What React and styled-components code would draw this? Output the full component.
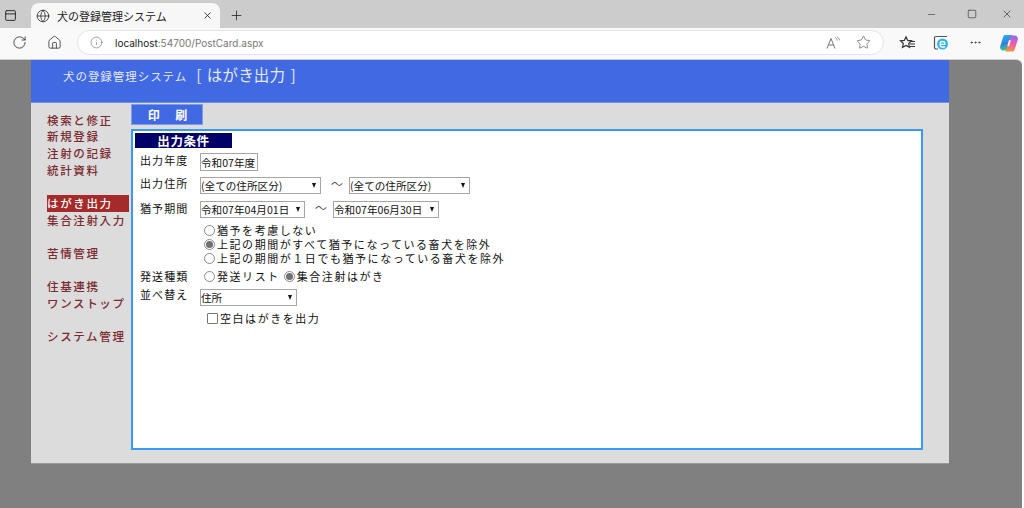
import React from 'react';
import styled, { createGlobalStyle } from 'styled-components';
import { Globe, X, Plus, RotateCw, Home, Info, Star, Minus, Square, MoreHorizontal, PanelTop } from 'lucide-react';

const JP = `"Noto Sans CJK JP", "Liberation Sans", sans-serif`;

const Global = createGlobalStyle`
    html, body { margin: 0; padding: 0; background: #fbfbfb; overflow: hidden; }
    body { font-family: ${JP}; }
`;

const Screen = styled.div`
    width: 1024px;
    height: 508px;
    display: flex;
    flex-direction: column;
    overflow: hidden;
`;

// browser chrome
const TabStrip = styled.div`
    height: 28px;
    background: #cccccc;
    display: flex;
    align-items: flex-end;
    color: #222;
`;

const TabToggle = styled.div`
    width: 31px;
    height: 28px;
    display: flex;
    align-items: center;
    padding: 2px 0 0 4px;
    box-sizing: border-box;
`;

const Tab = styled.div`
    width: 189px;
    height: 25px;
    box-sizing: border-box;
    background: #f7f7f7;
    border-radius: 8px 8px 0 0;
    display: flex;
    align-items: center;
    padding: 0 7px 0 5px;
    font-size: 11px;
    color: #222;
`;

const TabTitle = styled.span`
    flex: 1;
    margin-left: 7px;
`;

const NewTab = styled.div`
    width: 32px;
    height: 25px;
    display: flex;
    align-items: center;
    justify-content: center;
`;

const WindowButtons = styled.div`
    margin-left: auto;
    height: 28px;
    display: flex;
    align-items: center;
    color: #444;
`;

const WindowButton = styled.div`
    width: ${p => p.$w}px;
    display: flex;
    justify-content: center;
`;

const Toolbar = styled.div`
    height: 31px;
    box-sizing: border-box;
    background: #f9f9f9;
    display: flex;
    align-items: center;
    color: #333;
    padding-bottom: 2px;
`;

const ToolButton = styled.div`
    width: ${p => p.$w}px;
    display: flex;
    justify-content: center;
    align-items: center;
    flex: none;
`;

const Omnibox = styled.div`
    width: 807px;
    height: 25px;
    margin-left: 6px;
    flex: none;
    box-sizing: border-box;
    background: #fff;
    border: 1px solid #e3e3e3;
    border-radius: 13px;
    display: flex;
    align-items: center;
    padding: 0 12px 0 12px;
    font-family: "Inter", "Noto Sans", sans-serif;
    font-size: 10px;
    color: #777;
`;

const Host = styled.span`
    color: #222;
`;

const Url = styled.span`
    margin-left: 12px;
    flex: 1;
`;

const ReadAloud = styled.svg`
    margin-right: 14px;
    flex: none;
`;

// page
const Viewport = styled.div`
    flex: 1;
    width: 1022px;
    background: #808080;
    border-top-right-radius: 6px;
    border-top: 1px solid #d0d0d0;
    box-sizing: border-box;
    padding-left: 31px;
`;

const Wrapper = styled.div`
    width: 918px;
    height: 404px;
    background: #dcdcdc;
    box-sizing: border-box;
    border-bottom: 1px solid #999;
    display: flex;
    flex-direction: column;
`;

const Header = styled.header`
    height: 43px;
    flex: none;
    box-sizing: border-box;
    background: #4169e1;
    border-bottom: 1px solid #6f8fe8;
    color: #e4e8f8;
    display: flex;
    align-items: baseline;
    padding: 3px 0 0 32px;
`;

const SystemName = styled.span`
    font-size: 11.5px;
    letter-spacing: 0.95px;
`;

const PageName = styled.span`
    font-size: 15.5px;
    margin-left: 9px;
    letter-spacing: 0.2px;
    word-spacing: 1.5px;
`;

const Body = styled.div`
    flex: 1;
    display: flex;
`;

const Side = styled.nav`
    width: 100px;
    flex: none;
    padding: 8.5px 0 0 16px;
    box-sizing: border-box;
`;

const NavItem = styled.div`
    height: 16.7px;
    line-height: 16.7px;
    width: 82px;
    font-size: 11.5px;
    font-weight: 500;
    letter-spacing: 1.65px;
    white-space: nowrap;
    color: ${p => (p.$active ? '#fff' : '#7b2a2f')};
    background: ${p => (p.$active ? '#a52a2a' : 'transparent')};
`;

const NavGap = styled.div`
    height: 16.7px;
`;

const Main = styled.main`
    flex: 1;
    padding-top: 1px;
`;

const PrintButton = styled.div`
    width: 72px;
    height: 21px;
    box-sizing: border-box;
    background: #4169e1;
    border: 1px solid #7f9bea;
    color: #fff;
    font-size: 12px;
    font-weight: 700;
    display: flex;
    align-items: center;
    justify-content: center;
    padding-left: 5px;
    letter-spacing: 4px;
    word-spacing: 5px;
`;

const Panel = styled.section`
    width: 792px;
    height: 321px;
    margin-top: 4px;
    box-sizing: border-box;
    background: #fff;
    border: 2px solid #3a9af0;
    padding: 2px 2px;
    font-size: 11px;
    letter-spacing: 1.55px;
    color: #111;
`;

const PanelTitle = styled.div`
    width: 97px;
    height: 15px;
    background: #000066;
    color: #fff;
    font-size: 12.5px;
    font-weight: 700;
    line-height: 15px;
    text-align: center;
    letter-spacing: 0.6px;
    margin-bottom: 5px;
`;

const Row = styled.div`
    display: flex;
    align-items: center;
    height: ${p => p.$h || 18}px;
    margin-top: ${p => p.$mt || 0}px;
    padding-left: ${p => p.$pl || 0}px;
    white-space: nowrap;
`;

const Label = styled.span`
    width: 60px;
    margin-left: 5px;
    margin-bottom: ${p => p.$up}px;
    flex: none;
    letter-spacing: 1.1px;
`;

const Field = styled.div`
    width: ${p => p.$w}px;
    height: ${p => p.$h || 18}px;
    flex: none;
    box-sizing: border-box;
    background: #fff;
    border: 1px solid #a6a6a6;
    font-size: 10.6px;
    letter-spacing: 0;
    line-height: 15px;
    display: flex;
    align-items: center;
    justify-content: space-between;
    color: #111;
`;

const Arrow = styled.span`
    width: 0;
    height: 0;
    border-left: 2.5px solid transparent;
    border-right: 2.5px solid transparent;
    border-top: 5px solid #111;
    margin-right: 4px;
`;

const Wave = styled.span`
    width: 24px;
    padding-left: 4px;
    margin-bottom: 4px;
    text-align: center;
    font-size: 12px;
    font-weight: 300;
    letter-spacing: 0;
    flex: none;
`;

const Radio = styled.span`
    width: 11px;
    height: 11px;
    flex: none;
    box-sizing: border-box;
    border-radius: 50%;
    border: 1px solid #8a8a8a;
    background: #fff;
    margin-left: ${p => p.$ml || 0}px;
    margin-right: 2px;
    display: inline-flex;
    align-items: center;
    justify-content: center;

    &::after {
        content: '';
        width: 7px;
        height: 7px;
        border-radius: 50%;
        background: ${p => (p.$on ? '#707070' : 'transparent')};
    }
`;

const Check = styled.span`
    width: 11px;
    height: 11px;
    flex: none;
    box-sizing: border-box;
    border: 1px solid #777;
    border-radius: 1px;
    margin-right: 2px;
`;

const Select = ({ w, children }) => (
    <Field $w={w} $h={17}>
        <span>{children}</span>
        <Arrow />
    </Field>
);

const RadioLine = ({ on, children }) => (
    <Row $h={14} $pl={69}>
        <Radio $on={on} />
        {children}
    </Row>
);

const CopilotIcon = () => (
    <svg width="20" height="20" viewBox="0 0 20 20">
        <defs>
            <linearGradient id="cpA" x1="0.3" y1="0" x2="0.5" y2="1">
                <stop offset="0" stopColor="#27b0e0" />
                <stop offset="0.55" stopColor="#2f7fe8" />
                <stop offset="1" stopColor="#45d36c" />
            </linearGradient>
            <linearGradient id="cpB" x1="0.6" y1="0" x2="0.4" y2="1">
                <stop offset="0" stopColor="#8f6cf0" />
                <stop offset="0.5" stopColor="#ea5fa8" />
                <stop offset="1" stopColor="#f5933c" />
            </linearGradient>
        </defs>
        <path d="M6 2h7.500L11 10l-2.500 7.500H4.500C2 17.500.6 15.500 1.300 13L4 4.500C4.400 3 5 2 6 2z" fill="url(#cpA)" />
        <path d="M14 18.500H6.500L9.500 10l2-7.500h4C18 2.500 19.400 4.500 18.700 7L16 15.500c-.4 1.500-1 3-2 3z" fill="url(#cpB)" />
        <path d="M10 7l1.800.3-1.700 6-1.800-.3z" fill="#fff" opacity="0.9" />
    </svg>
);

const EdgeBoxIcon = () => (
    <svg width="16" height="16" viewBox="0 0 16 16" fill="none">
        <path d="M14 1.500H3A1.500 1.500 0 0 0 1.500 3v9.500A1.500 1.500 0 0 0 3 14h2" stroke="#555" strokeWidth="1.2" />
        <circle cx="9.500" cy="9" r="5.500" fill="#2fb4ee" />
        <path d="M7 9.300h5c0-1.800-1-2.800-2.500-2.800S7 7.600 7 9.300c0 1.800 1.200 2.900 2.900 2.900 .8 0 1.500-.2 2.100-.5" stroke="#fff" strokeWidth="1.3" />
    </svg>
);

const FavoritesIcon = () => (
    <svg width="17" height="16" viewBox="0 0 17 16" fill="none" stroke="#333" strokeWidth="1.2">
        <path d="M7 1.800l1.700 3.600 3.800.4-2.800 2.700.8 3.800L7 10.400l-3.500 1.900.8-3.800L1.500 5.800l3.800-.4z" />
        <path d="M11.500 6.500h4.500M11 9h5M11 11.500h5" />
    </svg>
);

export default function App() {
    return (
        <Screen>
            <Global />
            <TabStrip>
                <TabToggle><PanelTop size={13} strokeWidth={1.7} /></TabToggle>
                <Tab>
                    <Globe size={14} strokeWidth={1.3} />
                    <TabTitle>犬の登録管理システム</TabTitle>
                    <X size={11} strokeWidth={1.8} />
                </Tab>
                <NewTab><Plus size={15} strokeWidth={1.3} /></NewTab>
                <WindowButtons>
                    <WindowButton $w={44}><Minus size={11} strokeWidth={1.5} /></WindowButton>
                    <WindowButton $w={37}><Square size={10} strokeWidth={1.8} /></WindowButton>
                    <WindowButton $w={34}><X size={12} strokeWidth={1.5} /></WindowButton>
                </WindowButtons>
            </TabStrip>
            <Toolbar>
                <ToolButton $w={38}><RotateCw size={15} strokeWidth={1.4} /></ToolButton>
                <ToolButton $w={33}><Home size={15} strokeWidth={1.3} /></ToolButton>
                <Omnibox>
                    <Info size={13} strokeWidth={1.1} color="#666" />
                    <Url><Host>localhost</Host>:54700/PostCard.aspx</Url>
                    <ReadAloud width="16" height="14" viewBox="0 0 16 14" fill="none" stroke="#777" strokeWidth="1">
                        <path d="M1 12.500L5 2.500l4 10M2.500 9h5" />
                        <path d="M9 1.500c1.200.6 2 1.500 2.300 3M11 .8c1.500.8 2.300 2 2.500 3.500" strokeWidth="0.8" />
                    </ReadAloud>
                    <Star size={15} strokeWidth={1.2} color="#666" />
                </Omnibox>
                <ToolButton $w={46}><FavoritesIcon /></ToolButton>
                <ToolButton $w={22}><EdgeBoxIcon /></ToolButton>
                <ToolButton $w={47}><MoreHorizontal size={13} strokeWidth={1.7} /></ToolButton>
                <ToolButton $w={20}><CopilotIcon /></ToolButton>
            </Toolbar>
            <Viewport>
                <Wrapper>
                    <Header>
                        <SystemName>犬の登録管理システム</SystemName>
                        <PageName>[ はがき出力 ]</PageName>
                    </Header>
                    <Body>
                        <Side>
                            <NavItem>検索と修正</NavItem>
                            <NavItem>新規登録</NavItem>
                            <NavItem>注射の記録</NavItem>
                            <NavItem>統計資料</NavItem>
                            <NavGap />
                            <NavItem $active>はがき出力</NavItem>
                            <NavItem>集合注射入力</NavItem>
                            <NavGap />
                            <NavItem>苦情管理</NavItem>
                            <NavGap />
                            <NavItem>住基連携</NavItem>
                            <NavItem>ワンストップ</NavItem>
                            <NavGap />
                            <NavItem>システム管理</NavItem>
                        </Side>
                        <Main>
                            <PrintButton>印 刷</PrintButton>
                            <Panel>
                                <PanelTitle>出力条件</PanelTitle>
                                <Row>
                                    <Label $up={4}>出力年度</Label>
                                    <Field $w={58}>令和07年度</Field>
                                </Row>
                                <Row $mt={6} $h={17}>
                                    <Label $up={5}>出力住所</Label>
                                    <Select w={121}>(全ての住所区分)</Select>
                                    <Wave>～</Wave>
                                    <Select w={121}>(全ての住所区分)</Select>
                                </Row>
                                <Row $mt={7} $h={17}>
                                    <Label $up={3}>猶予期間</Label>
                                    <Select w={105}>令和07年04月01日</Select>
                                    <Wave>～</Wave>
                                    <Select w={106}>令和07年06月30日</Select>
                                </Row>
                                <Row $h={5} />
                                <RadioLine>猶予を考慮しない</RadioLine>
                                <RadioLine on>上記の期間がすべて猶予になっている畜犬を除外</RadioLine>
                                <RadioLine>上記の期間が１日でも猶予になっている畜犬を除外</RadioLine>
                                <Row $mt={4} $h={14}>
                                    <Label $up={1}>発送種類</Label>
                                    <Radio $ml={4} />
                                    発送リスト
                                    <Radio $on $ml={4} />
                                    集合注射はがき
                                </Row>
                                <Row $mt={6} $h={17}>
                                    <Label $up={7}>並べ替え</Label>
                                    <Select w={97}>住所</Select>
                                </Row>
                                <Row $mt={5} $h={14} $pl={72}>
                                    <Check />
                                    空白はがきを出力
                                </Row>
                            </Panel>
                        </Main>
                    </Body>
                </Wrapper>
            </Viewport>
        </Screen>
    );
}
